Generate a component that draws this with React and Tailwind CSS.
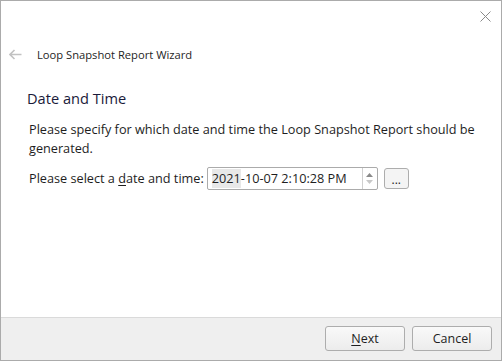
import React from "react";

export default function App() {
  const font = { fontFamily: '"Open Sans", "Noto Sans", sans-serif' };
  return (
    <div
      className="w-[502px] h-[361px] border border-[#ababab] bg-white flex flex-col text-[12.7px] text-[#1e1e1e] leading-[19px]"
      style={font}
    >
      <div className="flex justify-end pt-[9px] pr-[10px] h-[30px]">
        <svg width="11" height="11" viewBox="0 0 11 11" className="mt-[1px]">
          <path d="M0.5 0.5 L10.5 10.5 M10.5 0.5 L0.5 10.5" stroke="#8a8a8a" strokeWidth="1" fill="none" />
        </svg>
      </div>
      <div className="flex items-center h-[20px] mt-[13px]">
        <svg width="13" height="11" viewBox="0 0 13 11" className="ml-[8px]">
          <path d="M5.5 1 L1 5.5 L5.5 10 M1 5.5 L12.5 5.5" stroke="#c2c2c2" strokeWidth="1.6" fill="none" />
        </svg>
        <span className="ml-[15px] text-[11.2px]">Loop Snapshot Report Wizard</span>
      </div>
      <div className="pl-[26px] mt-[24px] text-[14.6px] leading-[20px] text-[#1a1a3a]">Date and Time</div>
      <div className="pl-[28px] mt-[12px]">
        <div className="whitespace-nowrap">Please specify for which date and time the Loop Snapshot Report should be</div>
        <div>generated.</div>
      </div>
      <div className="pl-[28px] mt-[9px] flex items-center">
        <span className="whitespace-nowrap">
          Please select a <span className="underline underline-offset-2">d</span>ate and time:
        </span>
        <div className="ml-[3px] w-[171px] h-[23px] border border-[#ababab] rounded-[2px] flex items-stretch bg-white shrink-0">
          <div className="flex-1 flex items-center pl-[4px] whitespace-nowrap">
            <span className="bg-[#e8e8e8]">2021</span>-10-07 2:10:28 PM
          </div>
          <div className="w-[15px] flex flex-col items-center justify-center border-l border-[#d0d0d0] gap-[3px]">
            <svg width="7" height="4" viewBox="0 0 7 4">
              <path d="M0 4 L3.5 0 L7 4 Z" fill="#8a8a8a" />
            </svg>
            <svg width="7" height="4" viewBox="0 0 7 4">
              <path d="M0 0 L3.5 4 L7 0 Z" fill="#c8c8c8" />
            </svg>
          </div>
        </div>
        <button className="ml-[6px] w-[25px] h-[21px] border border-[#adadad] rounded-[3px] bg-[#f4f4f4] text-[12px] leading-[14px] flex items-center justify-center pt-[2px] shrink-0">
          ...
        </button>
      </div>
      <div className="mt-auto h-[43px] border-t border-[#dadada] bg-[#efefef] flex justify-end items-start pt-[8px] pr-[9px] gap-[7px]">
        <button className="w-[80px] h-[25px] border border-[#adadad] rounded-[3px] bg-gradient-to-b from-[#f9f9f9] to-[#ececec] text-[12.5px]">
          <span className="underline underline-offset-2">N</span>ext
        </button>
        <button className="w-[80px] h-[25px] border border-[#adadad] rounded-[3px] bg-gradient-to-b from-[#f9f9f9] to-[#ececec] text-[12.5px]">
          Cancel
        </button>
      </div>
    </div>
  );
}
